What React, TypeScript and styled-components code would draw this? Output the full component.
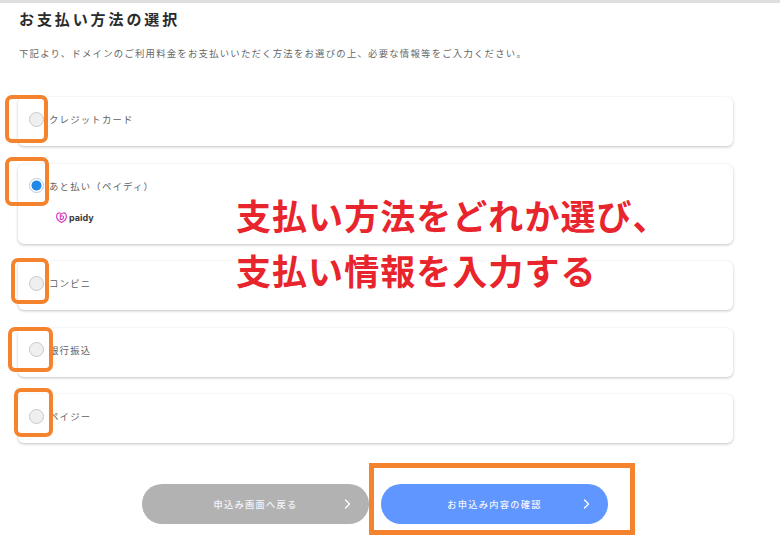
import styled, { createGlobalStyle } from "styled-components";

const GlobalStyle = createGlobalStyle`
  html, body {
    margin: 0;
    padding: 0;
    background: #fff;
  }
  body {
    font-family: "Noto Sans CJK JP", "Noto Sans", sans-serif;
  }
`;

const METHODS = [
  { id: "credit", label: "クレジットカード", checked: false },
  { id: "paidy", label: "あと払い（ペイディ）", checked: true, paidy: true },
  { id: "conveni", label: "コンビニ", checked: false },
  { id: "bank", label: "銀行振込", checked: false },
  { id: "payeasy", label: "ペイジー", checked: false },
];

const MARKS = [
  { left: 5, top: 95, width: 43, height: 48 },
  { left: 5, top: 157, width: 44, height: 49 },
  { left: 11, top: 258, width: 38, height: 46 },
  { left: 8, top: 327, width: 45, height: 45 },
  { left: 14, top: 388, width: 39, height: 49 },
];

const Chevron = () => (
  <svg width="7" height="10" viewBox="0 0 7 10" fill="none">
    <polyline
      points="1.5,1 5.5,5 1.5,9"
      stroke="#fff"
      strokeWidth="1.3"
      strokeLinecap="round"
      strokeLinejoin="round"
    />
  </svg>
);

const PaidyMark = () => (
  <svg width="11" height="11" viewBox="0 0 11 11" fill="none">
    <path
      d="M5.5 2 C4.6 0.8 2.6 0.6 1.5 1.6 C0.5 2.5 0.6 4 0.7 5.4 C0.8 7.2 2 8.2 3.4 9.2 L5.5 10.4 L7.6 9.2 C9 8.2 10.2 7.2 10.3 5.4 C10.4 4 10.5 2.5 9.5 1.6 C8.4 0.6 6.4 0.8 5.5 2 Z"
      stroke="#d93bc0"
      strokeWidth="1.2"
      strokeLinejoin="round"
    />
    <path
      d="M4.3 2.6 L4.3 7.4 C6 7.6 7.6 6.8 7.6 5.3 C7.6 4 6 3.4 4.6 4.2"
      stroke="#d93bc0"
      strokeWidth="1.1"
      strokeLinecap="round"
    />
  </svg>
);

const App = () => (
  <Page>
    <GlobalStyle />
    <Title>お支払い方法の選択</Title>
    <Lead>
      下記より、ドメインのご利用料金をお支払いいただく方法をお選びの上、必要な情報等をご入力ください。
    </Lead>

    <MethodList>
      {METHODS.map((method) => (
        <MethodCard key={method.id} tall={!!method.paidy}>
          <MethodRow>
            <Radio checked={method.checked} />
            <MethodLabel>{method.label}</MethodLabel>
          </MethodRow>
          {method.paidy && (
            <PaidyLogo>
              <PaidyMark />
              <PaidyText>paidy</PaidyText>
            </PaidyLogo>
          )}
        </MethodCard>
      ))}
    </MethodList>

    <Buttons>
      <PillButton color="#b2b2b2">
        <span>申込み画面へ戻る</span>
        <ChevronSlot>
          <Chevron />
        </ChevronSlot>
      </PillButton>
      <PillButton color="#5f96ff">
        <span>お申込み内容の確認</span>
        <ChevronSlot>
          <Chevron />
        </ChevronSlot>
      </PillButton>
    </Buttons>

    {MARKS.map((mark) => (
      <OrangeMark
        key={mark.top}
        style={{
          left: mark.left,
          top: mark.top,
          width: mark.width,
          height: mark.height,
        }}
      />
    ))}
    <OrangeFrame />
    <Note>
      <NoteLine>支払い方法をどれか選び、</NoteLine>
      <NoteLine>支払い情報を入力する</NoteLine>
    </Note>
  </Page>
);

export default App;

const Page = styled.div`
  position: relative;
  width: 780px;
  height: 537px;
  overflow: hidden;
  box-sizing: border-box;
  padding: 0 47px 0 18px;
  background: #fff;
  border-top: 3px solid #dfdfdf;
`;

const Title = styled.h1`
  margin: 7px 0 0 1px;
  font-size: 15px;
  line-height: 18px;
  font-weight: 700;
  letter-spacing: 2.9px;
  color: #2b2b2b;
`;

const Lead = styled.p`
  margin: 18px 0 0 1px;
  font-size: 9.4px;
  line-height: 14px;
  letter-spacing: 1.22px;
  color: #666;
  white-space: nowrap;
`;

const MethodList = styled.div`
  display: flex;
  flex-direction: column;
  gap: 17.5px;
  margin-top: 37px;
`;

const MethodCard = styled.div<{ tall: boolean }>`
  box-sizing: border-box;
  height: ${({ tall }) => (tall ? "80px" : "49px")};
  padding: 14px 11px 0;
  background: #fff;
  border-radius: 6px;
  box-shadow: 0 1px 3px rgba(0, 0, 0, 0.24), 0 0 1px rgba(0, 0, 0, 0.03);
`;

const MethodRow = styled.div`
  display: flex;
  align-items: center;
  gap: 5px;
  height: 16px;
`;

const Radio = styled.span<{ checked: boolean }>`
  box-sizing: border-box;
  flex: none;
  width: 15px;
  height: 15px;
  border-radius: 50%;
  border: 1px solid ${({ checked }) => (checked ? "#b9cbe0" : "#c9c9c9")};
  background: ${({ checked }) =>
    checked
      ? "radial-gradient(circle, #2188e6 0 4.6px, #fff 5.4px)"
      : "#efefef"};
`;

const MethodLabel = styled.span`
  font-size: 9.4px;
  line-height: 14px;
  letter-spacing: 1.2px;
  color: #606060;
`;

const PaidyLogo = styled.div`
  display: flex;
  align-items: center;
  gap: 2px;
  margin: 18px 0 0 27px;
`;

const PaidyText = styled.span`
  font-family: "Inter", "Noto Sans", sans-serif;
  font-size: 9px;
  line-height: 11px;
  font-weight: 700;
  color: #3a3a3a;
`;

const Buttons = styled.div`
  display: flex;
  gap: 12px;
  margin: 41px 0 0 124px;
`;

const PillButton = styled.div<{ color: string }>`
  position: relative;
  display: flex;
  align-items: center;
  justify-content: center;
  width: 227px;
  height: 40px;
  border-radius: 20px;
  background: ${({ color }) => color};
  color: #f2f5fb;
  font-size: 9.2px;
  font-weight: 500;
  letter-spacing: 1.3px;
`;

const ChevronSlot = styled.span`
  position: absolute;
  right: 18px;
  top: 15px;
  display: flex;
`;

const OrangeMark = styled.div`
  position: absolute;
  box-sizing: border-box;
  margin-top: -3px;
  border: 4.5px solid #f5822d;
  border-radius: 7px;
`;

const OrangeFrame = styled.div`
  position: absolute;
  box-sizing: border-box;
  left: 369px;
  top: 460px;
  width: 266px;
  height: 72px;
  border: 5px solid #f5822d;
`;

const Note = styled.div`
  position: absolute;
  left: 236px;
  top: 184px;
`;

const NoteLine = styled.div`
  font-size: 35px;
  line-height: 55px;
  font-weight: 700;
  letter-spacing: 1.05px;
  color: #e8242c;
  white-space: nowrap;
`;
